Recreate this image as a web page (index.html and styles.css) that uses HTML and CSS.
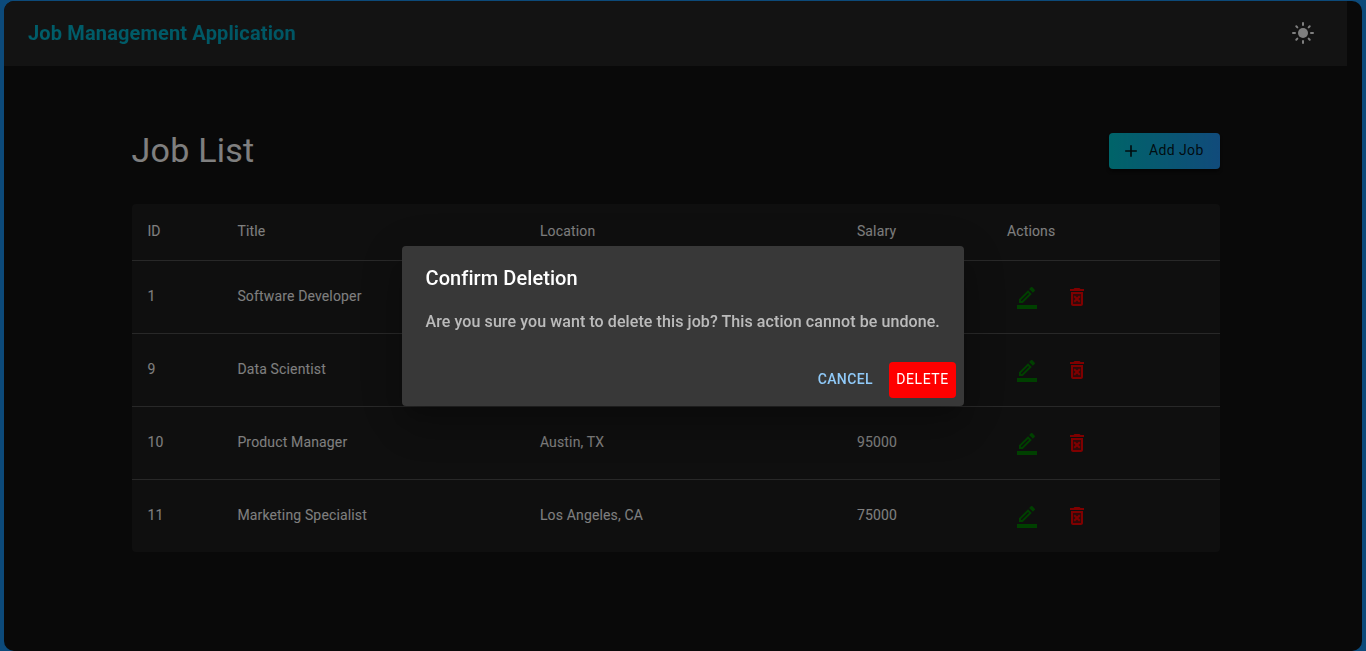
FILE: index.html
```html
<!DOCTYPE html>
<html lang="en">
<head>
<meta charset="utf-8">
<title>Job Management Application</title>
<link rel="stylesheet" href="styles.css">
</head>
<body>
<svg class="sprite" aria-hidden="true">
  <symbol id="edit" viewBox="0 0 24 24"><path d="M16.81 8.94l-3.75-3.75L4 14.25V18h3.75l9.06-9.06zM6 16v-.92l7.06-7.06.92.92L6.92 16H6zM19.71 6.04c.39-.39.39-1.02 0-1.41l-2.34-2.34c-.2-.2-.45-.29-.71-.29s-.51.1-.7.29l-1.83 1.83 3.75 3.75 1.83-1.83zM2 20h20v4H2z"/></symbol>
  <symbol id="trash" viewBox="0 0 24 24"><path opacity=".3" d="M8 9h8v10H8z"/><path d="M14.12 10.47L12 12.59l-2.13-2.12-1.41 1.41L10.59 14l-2.12 2.12 1.41 1.41L12 15.41l2.12 2.12 1.41-1.41L13.41 14l2.12-2.12zM15.5 4l-1-1h-5l-1 1H5v2h14V4zM6 19c0 1.1.9 2 2 2h8c1.1 0 2-.9 2-2V7H6v12zM8 9h8v10H8V9z"/></symbol>
</svg>
<div class="window">
  <header class="appbar">
    <div class="brand">Job Management Application</div>
    <button class="icon-button"><svg class="icon" viewBox="0 0 24 24"><circle cx="12" cy="12" r="5"/><path class="rays" d="M2 12h2M20 12h2M12 2v2M12 20v2M5.29 5.29l1.06 1.06M17.65 17.65l1.06 1.06M18.71 5.29l-1.06 1.06M6.35 17.65l-1.06 1.06"/></svg></button>
  </header>
  <main class="content">
    <div class="heading">
      <h1 class="title">Job List</h1>
      <button class="add"><svg class="add-icon" viewBox="0 0 24 24"><path d="M19 13h-6v6h-2v-6H5v-2h6V5h2v6h6z"/></svg><span class="add-label">Add Job</span></button>
    </div>
    <div class="table">
      <div class="row head"><div>ID</div><div>Title</div><div>Location</div><div>Salary</div><div>Actions</div></div>
      <div class="row"><div>1</div><div>Software Developer</div><div></div><div></div><div class="actions"><button class="icon-button edit"><svg class="icon"><use href="#edit"/></svg></button><button class="icon-button delete"><svg class="icon"><use href="#trash"/></svg></button></div></div>
      <div class="row"><div>9</div><div>Data Scientist</div><div></div><div></div><div class="actions"><button class="icon-button edit"><svg class="icon"><use href="#edit"/></svg></button><button class="icon-button delete"><svg class="icon"><use href="#trash"/></svg></button></div></div>
      <div class="row"><div>10</div><div>Product Manager</div><div>Austin, TX</div><div>95000</div><div class="actions"><button class="icon-button edit"><svg class="icon"><use href="#edit"/></svg></button><button class="icon-button delete"><svg class="icon"><use href="#trash"/></svg></button></div></div>
      <div class="row"><div>11</div><div>Marketing Specialist</div><div>Los Angeles, CA</div><div>75000</div><div class="actions"><button class="icon-button edit"><svg class="icon"><use href="#edit"/></svg></button><button class="icon-button delete"><svg class="icon"><use href="#trash"/></svg></button></div></div>
    </div>
  </main>
</div>
<div class="backdrop">
  <div class="dialog">
    <h2 class="dialog-title">Confirm Deletion</h2>
    <p class="dialog-text">Are you sure you want to delete this job? This action cannot be undone.</p>
    <div class="dialog-actions"><button class="action">Cancel</button><button class="action danger">Delete</button></div>
  </div>
</div>
</body>
</html>
```
FILE: styles.css
```css
* { box-sizing: border-box; }
body {
  margin: 0;
  height: 651px;
  overflow: hidden;
  padding: 1px 4px 0;
  background: #1894f4;
  font-family: Roboto, sans-serif;
  font-size: 14px;
  color: #fff;
}
button { border: 0; background: none; color: inherit; font: inherit; }
.sprite { display: none; }
.window {
  height: 650px;
  padding-right: 15px;
  border-radius: 10px;
  overflow: hidden;
  background: #121212;
}
.appbar {
  height: 65px;
  padding: 0 24px 1px;
  display: flex;
  align-items: center;
  justify-content: space-between;
  background: #272727;
}
.brand {
  padding-bottom: 1px;
  font-size: 20px;
  font-weight: 700;
  letter-spacing: .15px;
  color: transparent;
  background: linear-gradient(90deg, #00bcd4, #00acc8);
  background-clip: text;
}
.icon-button { display: flex; padding: 8px; }
.icon { display: block; width: 24px; height: 24px; fill: currentColor; }
.rays { stroke: currentColor; stroke-width: 2; stroke-linecap: round; }
.content { width: 1088px; margin: 67px 0 0 128px; }
.heading { display: flex; justify-content: space-between; height: 71px; }
.title { margin: -4px 0 0 -.5px; font-size: 34px; font-weight: 400; line-height: 42px; letter-spacing: .25px; }
.add {
  display: flex;
  align-items: center;
  width: 111px;
  height: 36px;
  padding: 0 0 0 12px;
  border-radius: 4px;
  background: linear-gradient(90deg, #00c8d2, #2296f6);
  color: rgba(0, 0, 0, .87);
  letter-spacing: .4px;
  box-shadow: 0 3px 3px rgba(0, 0, 0, .4);
}
.add-icon { width: 20px; height: 20px; margin-right: 8px; fill: currentColor; }
.add-label { padding-bottom: 2px; }
.table { border-radius: 4px; background: #1e1e1e; }
.row {
  display: grid;
  grid-template-columns: 90px 302.5px 317px 150px 1fr;
  align-items: center;
  height: 73px;
  padding: 0 16px 2px 15.4px;
  border-bottom: 1px solid #515151;
  letter-spacing: .15px;
}
.row:last-child { height: 72px; border-bottom: 0; }
.head { height: 57px; }
.actions { display: flex; gap: 10px; padding-top: 2px; }
.edit { color: #008000; }
.delete { color: #f00; }
.backdrop {
  position: fixed;
  inset: 0;
  display: flex;
  align-items: center;
  justify-content: center;
  background: rgba(0, 0, 0, .5);
}
.dialog {
  width: 562px;
  height: 160px;
  border-radius: 4px;
  background: #383838;
  box-shadow: 0 11px 15px -7px rgba(0,0,0,.2), 0 24px 38px 3px rgba(0,0,0,.14), 0 9px 46px 8px rgba(0,0,0,.12);
}
.dialog-title { margin: 0; padding: 16px 23.5px; font-size: 20px; font-weight: 500; line-height: 32px; letter-spacing: .08px; }
.dialog-text { margin: 0; padding: 0 23.5px 20px; font-size: 16px; font-weight: 500; line-height: 24px; letter-spacing: .09px; color: rgba(255, 255, 255, .66); white-space: nowrap; }
.dialog-actions { display: flex; justify-content: flex-end; gap: 8px; padding: 8px; }
.action { height: 36px; min-width: 64px; padding: 0 8px 2px; border-radius: 4px; font-weight: 500; letter-spacing: .4px; text-transform: uppercase; color: #90caf9; }
.danger { width: 67px; padding: 0 0 2px; background: #f00; color: #fff; font-weight: 400; letter-spacing: .6px; }
```
